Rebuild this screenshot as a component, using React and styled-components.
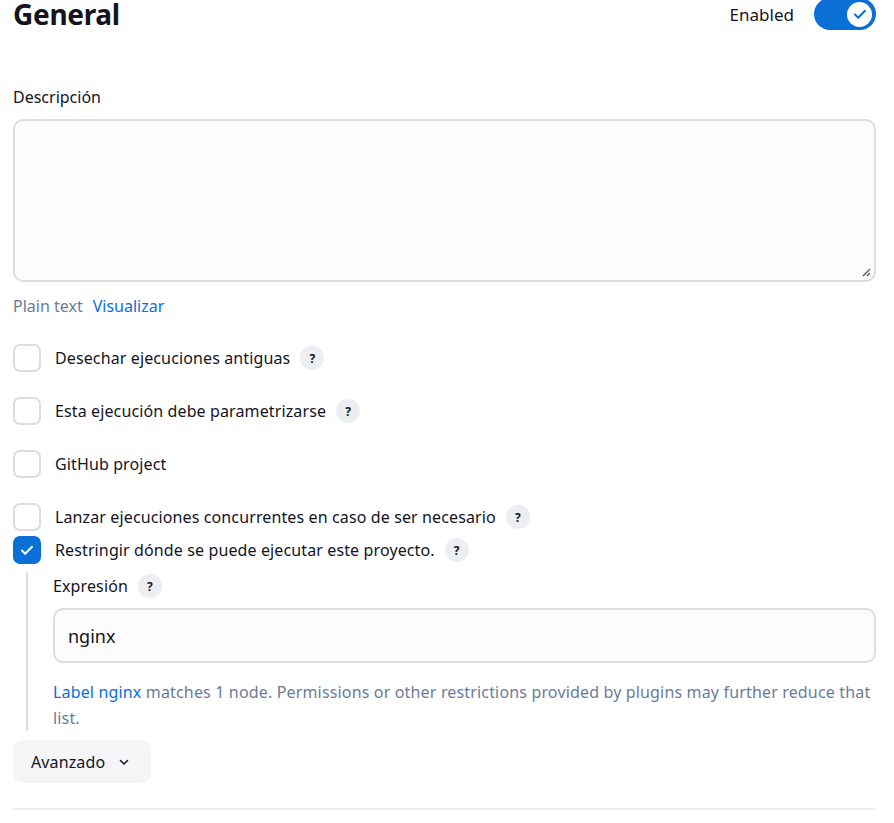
import styled, { createGlobalStyle } from "styled-components";

const GlobalStyle = createGlobalStyle`
  body {
    margin: 0;
    background: #fff;
    font-family: "Noto Sans", "Open Sans", sans-serif;
    color: #14141f;
  }
`;

const Page = styled.div`
  padding: 0 18px 0 13px;
`;

const Header = styled.div`
  display: flex;
  align-items: center;
  justify-content: space-between;
  height: 30px;
  margin-top: -1px;
`;

const Title = styled.h1`
  margin: 0;
  font-size: 28px;
  font-weight: 700;
  letter-spacing: -0.3px;
`;

const ToggleWrap = styled.label`
  display: flex;
  align-items: center;
  gap: 20px;
  font-size: 17px;
`;

const Toggle = styled.span`
  display: flex;
  align-items: center;
  justify-content: flex-end;
  width: 62px;
  height: 32px;
  border-radius: 16px;
  background: #0b6fd8;
  padding: 0 4px;
  box-sizing: border-box;
`;

const Knob = styled.span`
  display: flex;
  align-items: center;
  justify-content: center;
  width: 25px;
  height: 25px;
  border-radius: 50%;
  background: #fff;
`;

const Label = styled.div`
  font-size: 16px;
  margin: 57px 0 11px;
`;

const TextArea = styled.div`
  position: relative;
  height: 163px;
  border: 2px solid #dadce6;
  border-radius: 10px;
  background: #fcfcfc;
  box-sizing: border-box;
`;

const Grip = styled.svg`
  position: absolute;
  right: 3px;
  bottom: 3px;
`;

const Switcher = styled.div`
  display: flex;
  gap: 10px;
  margin-top: 13px;
  font-size: 16px;
`;

const Muted = styled.span`
  color: #6b7c98;
`;

const Link = styled.span`
  color: #0b6fd8;
`;

const Options = styled.div`
  margin-top: 27px;
  display: flex;
  flex-direction: column;
  letter-spacing: 0.12px;
`;

const Row = styled.div`
  display: flex;
  align-items: center;
  height: 28px;
  margin-bottom: ${(p) => p.$gap}px;
`;

const Box = styled.span`
  display: flex;
  align-items: center;
  justify-content: center;
  width: 28px;
  height: 28px;
  border-radius: 7px;
  box-sizing: border-box;
  border: ${(p) => (p.$checked ? "none" : "2px solid #dadce6")};
  background: ${(p) => (p.$checked ? "#0b6fd8" : "#fff")};
  margin-right: 14px;
`;

const RowText = styled.span`
  font-size: 16px;
`;

const Help = styled.span`
  display: inline-flex;
  align-items: center;
  justify-content: center;
  width: 24px;
  height: 24px;
  border-radius: 50%;
  background: #eceef2;
  font-size: 12px;
  font-weight: 700;
  margin-left: 10px;
  letter-spacing: 0;
`;

const Nested = styled.div`
  margin: 8px 0 0 13px;
  border-left: 2px solid #dadce6;
  padding: 0 0 0 25px;
`;

const SubLabel = styled.div`
  display: flex;
  align-items: center;
  font-size: 16px;
  height: 28px;
  letter-spacing: 0.12px;
`;

const Input = styled.div`
  display: flex;
  align-items: center;
  height: 55px;
  margin-top: 8px;
  padding: 0 13px;
  border: 2px solid #dadce6;
  border-radius: 10px;
  background: #fcfcfc;
  font-size: 18px;
  box-sizing: border-box;
`;

const Hint = styled.div`
  margin-top: 16px;
  font-size: 16px;
  line-height: 26px;
  letter-spacing: 0.16px;
  color: #6b7c98;
`;

const Advanced = styled.button`
  display: inline-flex;
  align-items: center;
  gap: 13px;
  margin-top: 9px;
  height: 43px;
  padding: 0 21px 0 18px;
  border: none;
  border-radius: 10px;
  background: #f5f5f8;
  font-family: inherit;
  font-size: 16px;
  letter-spacing: 0.12px;
  color: #14141f;
`;

const Divider = styled.hr`
  margin: 25px 0 0;
  border: none;
  border-top: 2px solid #eef0f3;
`;

const Check = ({ color = "#fff", size = 14 }) => (
  <svg width={size} height={size} viewBox="0 0 16 16" fill="none">
    <path d="M3 8.5l3.2 3.2L13 4.8" stroke={color} strokeWidth="2" strokeLinecap="round" strokeLinejoin="round" />
  </svg>
);

const options = [
  { text: "Desechar ejecuciones antiguas", help: true, gap: 25 },
  { text: "Esta ejecución debe parametrizarse", help: true, gap: 25 },
  { text: "GitHub project", help: false, gap: 25 },
  { text: "Lanzar ejecuciones concurrentes en caso de ser necesario", help: true, gap: 5 },
];

export default function App() {
  return (
    <>
      <GlobalStyle />
      <Page>
        <Header>
          <Title>General</Title>
          <ToggleWrap>
            Enabled
            <Toggle>
              <Knob>
                <Check color="#0b6fd8" size={16} />
              </Knob>
            </Toggle>
          </ToggleWrap>
        </Header>

        <Label>Descripción</Label>
        <TextArea>
          <Grip width="10" height="10" viewBox="0 0 10 10">
            <path d="M9 2L2 9M9 6L6 9" stroke="#555" strokeWidth="1.3" />
          </Grip>
        </TextArea>
        <Switcher>
          <Muted>Plain text</Muted>
          <Link>Visualizar</Link>
        </Switcher>

        <Options>
          {options.map((o) => (
            <Row key={o.text} $gap={o.gap}>
              <Box />
              <RowText>{o.text}</RowText>
              {o.help && <Help>?</Help>}
            </Row>
          ))}
          <Row $gap={0}>
            <Box $checked>
              <Check size={16} />
            </Box>
            <RowText>Restringir dónde se puede ejecutar este proyecto.</RowText>
            <Help>?</Help>
          </Row>
        </Options>

        <Nested>
          <SubLabel>
            Expresión
            <Help>?</Help>
          </SubLabel>
          <Input>nginx</Input>
          <Hint>
            <Link>Label nginx</Link> matches 1 node. Permissions or other restrictions
            provided by plugins may further reduce that list.
          </Hint>
        </Nested>

        <Advanced>
          Avanzado
          <svg width="12" height="12" viewBox="0 0 12 12" fill="none">
            <path d="M2.5 4.5L6 8l3.5-3.5" stroke="#14141f" strokeWidth="1.5" strokeLinecap="round" strokeLinejoin="round" />
          </svg>
        </Advanced>
        <Divider />
      </Page>
    </>
  );
}
